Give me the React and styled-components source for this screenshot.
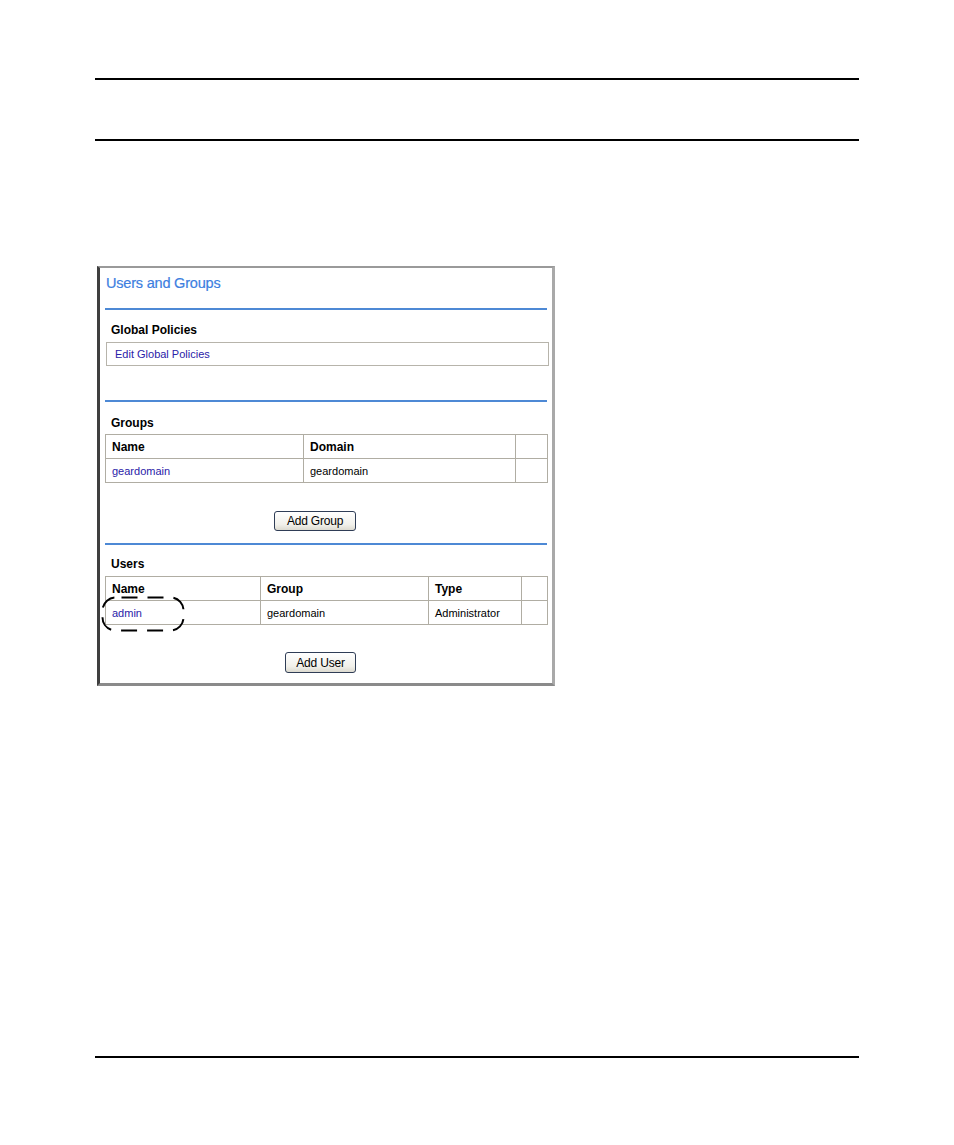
import styled, { createGlobalStyle } from "styled-components";

const GlobalStyle = createGlobalStyle`
  html, body {
    margin: 0;
    padding: 0;
    background: #fff;
  }
  body {
    font-family: "Liberation Sans", Arial, sans-serif;
    color: #000;
  }
`;

const Page = styled.div`
  width: 954px;
  height: 1145px;
  padding: 0 95px;
  box-sizing: border-box;
  overflow: hidden;
`;

const Rule = styled.div`
  height: 2px;
  background: #000;
  margin-top: ${(p) => p.$top}px;
`;

const Frame = styled.div`
  width: 458px;
  height: 420px;
  margin: 125px 0 0 2px;
  box-sizing: border-box;
  border-left: 3px solid #3f3f3f;
  border-top: 2px solid #9a9a9a;
  border-right: 3px solid #a9a9a9;
  border-bottom: 3px solid #8a8a8a;
  padding: 0 5px 0 5px;
  background: #fff;
`;

const Title = styled.div`
  height: 40px;
  box-sizing: border-box;
  padding: 7px 0 0 1px;
  font-size: 14.5px;
  color: #3d80df;
  letter-spacing: -0.2px;
  -webkit-text-stroke: 0.2px #3d80df;
`;

const BlueLine = styled.div`
  height: 2px;
  background: #4d89d5;
`;

const Section = styled.div`
  position: relative;
  height: ${(p) => p.$h}px;
  box-sizing: border-box;
  padding-top: ${(p) => p.$top}px;
`;

const Heading = styled.div`
  font-size: 12px;
  font-weight: bold;
  padding-left: 6px;
  height: 12px;
  line-height: 12px;
  margin-bottom: ${(p) => p.$gap}px;
`;

const LinkBox = styled.div`
  height: 24px;
  box-sizing: border-box;
  margin: 0 -2px 0 1px;
  border: 1px solid #b7b4ab;
  padding: 0 8px;
  display: flex;
  align-items: center;
`;

const Link = styled.span`
  color: #2a22a8;
  font-size: 11px;
`;

const Table = styled.table`
  width: 442px;
  border-collapse: collapse;
  table-layout: fixed;
  font-size: 11px;
`;

const Th = styled.th`
  height: 24px;
  padding: 0 6px;
  text-align: left;
  font-size: 12px;
  font-weight: bold;
  border: 1px solid #b0ada3;
  width: ${(p) => p.$w}px;
  box-sizing: border-box;
`;

const Td = styled.td`
  height: 24px;
  padding: 0 6px;
  border: 1px solid #b0ada3;
  color: ${(p) => (p.$link ? "#2a22a8" : "#000")};
  box-sizing: border-box;
`;

const ButtonRow = styled.div`
  display: flex;
  margin-top: ${(p) => p.$top}px;
  padding-left: ${(p) => p.$left}px;
`;

const Button = styled.button`
  font-family: "Liberation Sans", Arial, sans-serif;
  font-size: 12px;
  height: ${(p) => p.$h}px;
  width: ${(p) => p.$w}px;
  padding: 0;
  border: 1px solid #2f3d56;
  border-radius: 3px;
  background: linear-gradient(#ffffff, #f1f0ea 70%, #dcdad0);
  color: #000;
  letter-spacing: -0.2px;
`;

const Annotation = styled.svg`
  position: absolute;
  left: -4px;
  top: 51px;
  overflow: visible;
`;

function App() {
  return (
    <>
      <GlobalStyle />
      <Page>
        <Rule $top={78} />
        <Rule $top={59} />
        <Frame>
          <Title>Users and Groups</Title>
          <BlueLine />
          <Section $h={90} $top={14}>
            <Heading $gap={6}>Global Policies</Heading>
            <LinkBox>
              <Link>Edit Global Policies</Link>
            </LinkBox>
          </Section>
          <BlueLine />
          <Section $h={141} $top={15}>
            <Heading $gap={5}>Groups</Heading>
            <Table>
              <thead>
                <tr>
                  <Th $w={198}>Name</Th>
                  <Th $w={212}>Domain</Th>
                  <Th $w={32}></Th>
                </tr>
              </thead>
              <tbody>
                <tr>
                  <Td $link>geardomain</Td>
                  <Td>geardomain</Td>
                  <Td></Td>
                </tr>
              </tbody>
            </Table>
            <ButtonRow $top={28} $left={169}>
              <Button $w={82} $h={20}>Add Group</Button>
            </ButtonRow>
          </Section>
          <BlueLine />
          <Section $h={137} $top={13}>
            <Heading $gap={6}>Users</Heading>
            <Table>
              <thead>
                <tr>
                  <Th $w={155}>Name</Th>
                  <Th $w={168}>Group</Th>
                  <Th $w={93}>Type</Th>
                  <Th $w={26}></Th>
                </tr>
              </thead>
              <tbody>
                <tr>
                  <Td $link>admin</Td>
                  <Td>geardomain</Td>
                  <Td>Administrator</Td>
                  <Td></Td>
                </tr>
              </tbody>
            </Table>
            <Annotation width="85" height="36" viewBox="0 0 85 36">
              <rect
                x="1.5"
                y="1.5"
                width="81"
                height="33"
                rx="13"
                fill="none"
                stroke="#000"
                strokeWidth="2"
                strokeDasharray="16 10"
                strokeDashoffset="-6"
              />
            </Annotation>
            <ButtonRow $top={27} $left={180}>
              <Button $w={71} $h={21}>Add User</Button>
            </ButtonRow>
          </Section>
        </Frame>
        <Rule $top={370} />
      </Page>
    </>
  );
}

export default App;
